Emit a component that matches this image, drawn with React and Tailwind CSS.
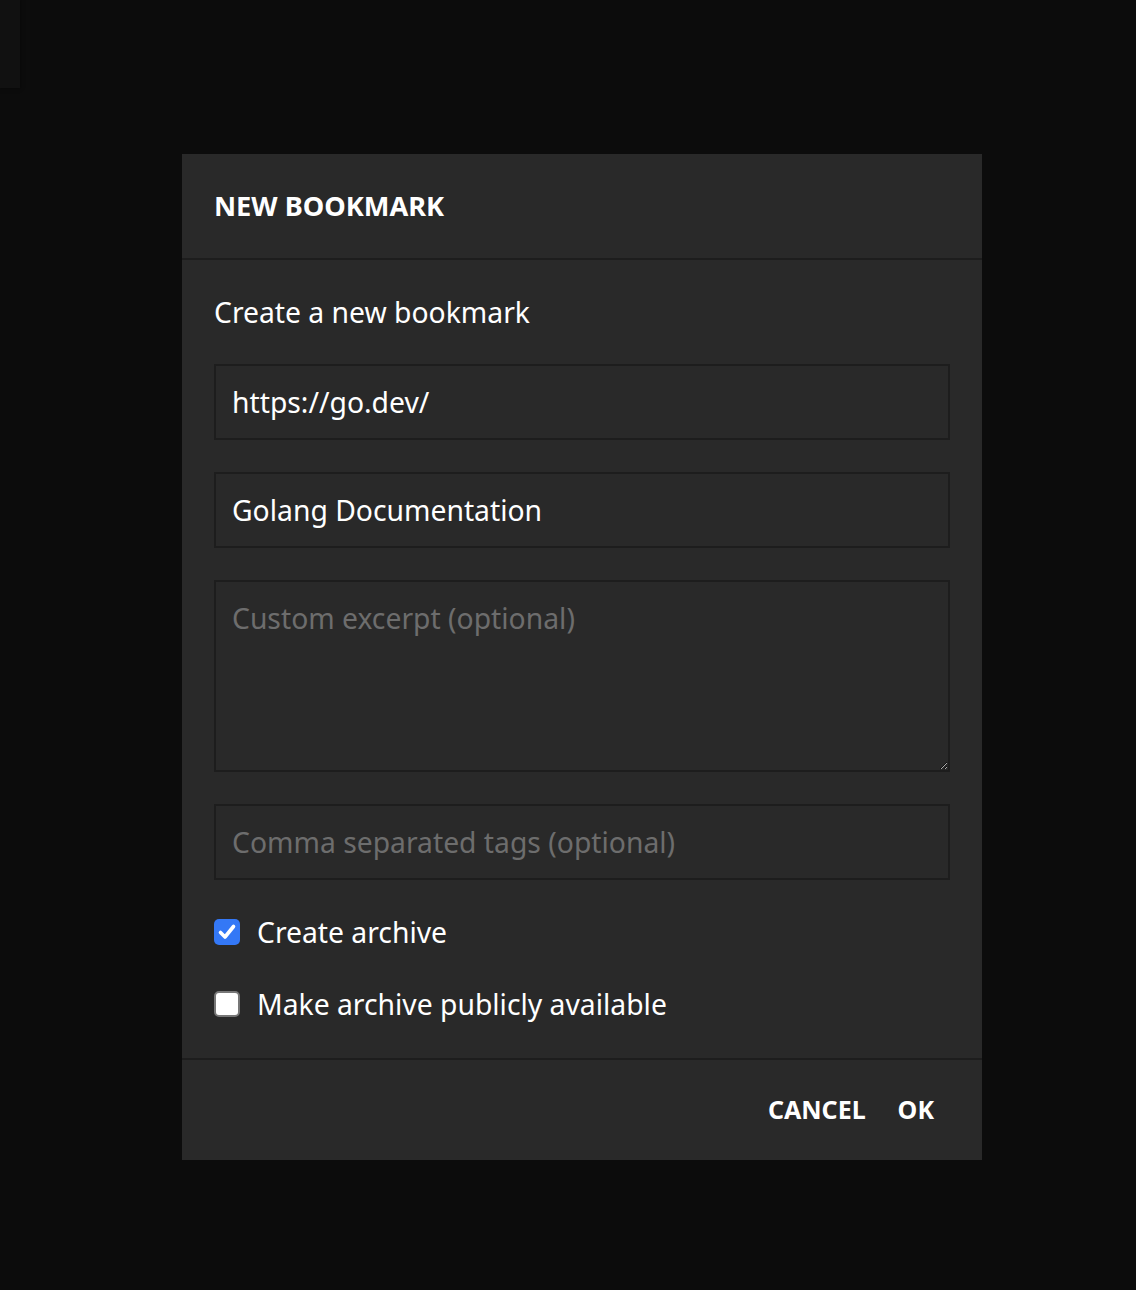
import { useState } from "react";

function CheckRow({ checked, label, onToggle }) {
  return (
    <label className="flex h-[40px] items-center gap-[17px] cursor-pointer" onClick={onToggle}>
      {checked ? (
        <span className="flex h-[26px] w-[26px] items-center justify-center rounded-[5px] bg-[#3478f6]">
          <svg width="22" height="22" viewBox="0 0 22 22" fill="none">
            <path d="M4.5 11.5 L9 16 L17.5 5.5" stroke="white" strokeWidth="3.6" strokeLinecap="round" strokeLinejoin="round" />
          </svg>
        </span>
      ) : (
        <span className="h-[26px] w-[26px] rounded-[5px] border-2 border-[#777777] bg-white" />
      )}
      <span className="text-[28.3px] text-white">{label}</span>
    </label>
  );
}

export default function App() {
  const [archive, setArchive] = useState(true);
  const [publicArchive, setPublicArchive] = useState(false);

  return (
    <div className="min-h-[1290px] bg-[#0c0c0c] font-['Noto_Sans',sans-serif]">
      <div className="h-[88px] w-[20px] bg-[#111111] shadow-[0_0_4px_rgba(0,0,0,0.6)]" />

      <div className="ml-[182px] mt-[66px] w-[800px] bg-[#292929]">
        <div className="flex h-[106px] items-center px-[32px] border-b-2 border-[#1d1d1d]">
          <h2 className="text-[27.2px] font-bold text-white">NEW BOOKMARK</h2>
        </div>

        <div className="flex flex-col gap-[32px] px-[32px] pt-[32px] pb-[34px]">
          <p className="h-[40px] leading-[40px] text-[28.3px] text-white">Create a new bookmark</p>

          <input
            className="h-[76px] w-full border-2 border-[#1d1d1d] bg-[#292929] px-[16px] text-[28.3px] text-white outline-none"
            defaultValue="https://go.dev/"
          />
          <input
            className="h-[76px] w-full border-2 border-[#1d1d1d] bg-[#292929] px-[16px] text-[28.3px] text-white outline-none"
            defaultValue="Golang Documentation"
          />
          <textarea
            className="block h-[192px] w-full border-2 border-[#1d1d1d] bg-[#292929] px-[16px] py-[16px] text-[28.3px] leading-[40px] text-white outline-none placeholder:text-[#6d6d6d]"
            placeholder="Custom excerpt (optional)"
          />
          <input
            className="h-[76px] w-full border-2 border-[#1d1d1d] bg-[#292929] px-[16px] text-[28.3px] text-white outline-none placeholder:text-[#6d6d6d]"
            placeholder="Comma separated tags (optional)"
          />

          <CheckRow checked={archive} label="Create archive" onToggle={() => setArchive(!archive)} />
          <CheckRow
            checked={publicArchive}
            label="Make archive publicly available"
            onToggle={() => setPublicArchive(!publicArchive)}
          />
        </div>

        <div className="flex h-[102px] items-center justify-end border-t-2 border-[#1d1d1d] px-[32px]">
          <button className="px-[16px] text-[25px] font-bold text-white">CANCEL</button>
          <button className="px-[16px] text-[25px] font-bold text-white">OK</button>
        </div>
      </div>
    </div>
  );
}
